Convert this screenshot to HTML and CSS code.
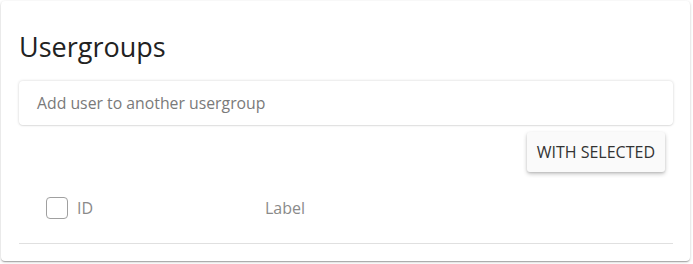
FILE: index.html
```html
<!DOCTYPE html>
<html>
<head>
<meta charset="utf-8">
<link rel="stylesheet" href="styles.css">
</head>
<body>
<div class="card">
  <h1 class="title">Usergroups</h1>
  <div class="search">Add user to another usergroup</div>
  <div class="actions">
    <button class="btn">WITH SELECTED</button>
  </div>
  <div class="thead">
    <div class="col-id"><span class="checkbox"></span><span>ID</span></div>
    <div class="col-label">Label</div>
  </div>
</div>
</body>
</html>
```
FILE: styles.css
```css
html, body { margin: 0; padding: 0; background: #fff; }
body { font-family: "Open Sans", "Noto Sans", sans-serif; width: 693px; height: 264px; overflow: hidden; }
.card {
  margin: 1px 0 0 1px;
  width: 689px;
  height: 260px;
  box-sizing: border-box;
  background: #fff;
  border-radius: 4px;
  box-shadow: 0 1px 3px rgba(0,0,0,0.2), 0 1px 1px rgba(0,0,0,0.14), 0 2px 1px -1px rgba(0,0,0,0.12);
  padding: 0 17px 0 18px;
  display: flex;
  flex-direction: column;
}
.title {
  margin: 28px 0 0 0;
  font-weight: 400;
  font-size: 27px;
  line-height: 36px;
  color: #222;
}
.search {
  margin-top: 16px;
  height: 44px;
  box-sizing: border-box;
  border-radius: 4px;
  box-shadow: 0 0 3px rgba(0,0,0,0.18), 0 1px 1px rgba(0,0,0,0.06);
  padding: 0 18px;
  font-size: 15.8px;
  line-height: 44px;
  color: #7a7a7a;
}
.actions {
  display: flex;
  justify-content: flex-end;
  margin-top: 7px;
  padding-right: 8px;
}
.btn {
  font-family: inherit;
  font-size: 16px;
  color: #333;
  background: #fafafa;
  border: none;
  border-radius: 3px;
  height: 40px;
  padding: 0 10px;
  box-shadow: 0 2px 4px rgba(0,0,0,0.22), 0 1px 2px rgba(0,0,0,0.1);
}
.thead {
  margin-top: 24px;
  height: 47px;
  border-bottom: 1px solid #e0e0e0;
  display: flex;
  align-items: flex-start;
  font-size: 16px;
  color: #8a8a8a;
}
.col-id {
  display: flex;
  align-items: center;
  gap: 9px;
  padding-left: 27px;
  width: 219px;
}
.checkbox {
  width: 20px;
  height: 20px;
  border: 1.5px solid #a0a0a0;
  border-radius: 4px;
  display: inline-block;
}
.col-id span:last-child, .col-label { line-height: 24px; }
```
